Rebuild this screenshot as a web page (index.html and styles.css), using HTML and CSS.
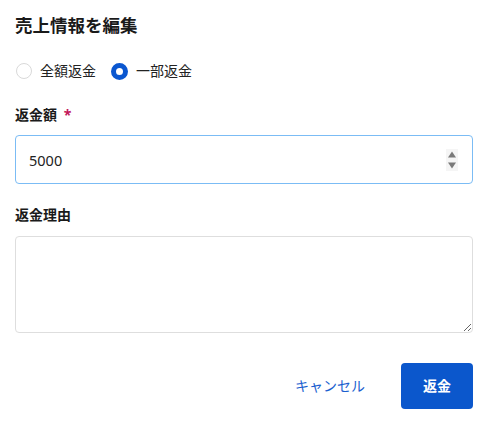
FILE: index.html
```html
<!DOCTYPE html>
<html lang="ja">
<head>
<meta charset="utf-8">
<link rel="stylesheet" href="styles.css">
</head>
<body>
<div class="dialog">
  <h2 class="title">売上情報を編集</h2>
  <div class="radios">
    <label class="radio"><span class="dot"></span><span>全額返金</span></label>
    <label class="radio checked"><span class="dot"></span><span>一部返金</span></label>
  </div>
  <div class="field amount">
    <div class="label">返金額 <span class="req">*</span></div>
    <div class="input focus">
      <input class="text" type="text" value="5000">
      <svg class="spin" width="12" height="22" viewBox="0 0 12 22">
        <rect x="0" y="0" width="12" height="22" fill="#f5f5f5"/>
        <path d="M2 8.5 L6 2.5 L10 8.5 Z" fill="#7a7a7a"/>
        <path d="M2 13.5 L10 13.5 L6 19.5 Z" fill="#7a7a7a"/>
      </svg>
    </div>
  </div>
  <div class="field reason">
    <div class="label">返金理由</div>
    <textarea class="area"></textarea>
  </div>
  <div class="actions">
    <button class="btn cancel">キャンセル</button>
    <button class="btn primary">返金</button>
  </div>
</div>
</body>
</html>
```

FILE: styles.css
```css
html, body {
  margin: 0;
  padding: 0;
  background: #ffffff;
}
body {
  font-family: "Noto Sans", "Noto Sans CJK JP", sans-serif;
  color: #1c1c1c;
}
.dialog {
  display: flex;
  flex-direction: column;
  padding: 13px 14px 0 15px;
}
.title {
  margin: 0;
  font-size: 17.5px;
  line-height: 24px;
  font-weight: 700;
  color: #1a1a1a;
}
.radios {
  display: flex;
  align-items: center;
  gap: 15px;
  margin-top: 24px;
  height: 20px;
}
.radio {
  display: flex;
  align-items: center;
  gap: 8px;
  font-size: 14px;
  line-height: 20px;
  color: #222;
}
.dot {
  box-sizing: border-box;
  width: 16px;
  height: 16px;
  border-radius: 50%;
  border: 1px solid #d9d9d9;
  background: #fff;
  margin-left: 1px;
}
.radio.checked .dot {
  width: 17px;
  height: 17px;
  margin-left: 0;
  border: 5px solid #0b57d0;
}
.field {
  display: flex;
  flex-direction: column;
}
.amount {
  margin-top: 24px;
}
.reason {
  margin-top: 21px;
}
.label {
  font-size: 14px;
  line-height: 20px;
  font-weight: 700;
  color: #1a1a1a;
  margin-bottom: 10px;
}
.reason .label {
  margin-bottom: 11px;
}
.req {
  color: #c2185b;
  margin-left: 3px;
}
.input {
  box-sizing: border-box;
  height: 49px;
  display: flex;
  align-items: center;
  border: 1px solid #d9d9d9;
  border-radius: 4px;
  padding: 0 14px 0 13px;
}
.input.focus {
  border-color: #7bbcf5;
}
.text {
  flex: 1;
  border: none;
  outline: none;
  padding: 0;
  margin: 0;
  font-family: "Noto Sans", "Noto Sans CJK JP", sans-serif;
  font-size: 14.5px;
  color: #222;
  background: transparent;
}
.spin {
  display: block;
}
.area {
  box-sizing: border-box;
  height: 97px;
  width: 100%;
  border: 1px solid #dedede;
  border-radius: 4px;
  margin: 0;
  padding: 8px 12px;
  font-family: "Noto Sans", "Noto Sans CJK JP", sans-serif;
  font-size: 14px;
  resize: vertical;
  outline: none;
}
.actions {
  display: flex;
  justify-content: flex-end;
  align-items: center;
  gap: 20px;
  margin-top: 30px;
}
.btn {
  font-family: "Noto Sans", "Noto Sans CJK JP", sans-serif;
  font-size: 14px;
  line-height: 20px;
  border: none;
  border-radius: 4px;
  height: 46px;
  cursor: pointer;
}
.cancel {
  background: transparent;
  color: #1b5fcf;
  padding: 0 16px;
}
.primary {
  background: #0b57cc;
  color: #fff;
  font-weight: 700;
  width: 72px;
  padding: 0;
}
```
